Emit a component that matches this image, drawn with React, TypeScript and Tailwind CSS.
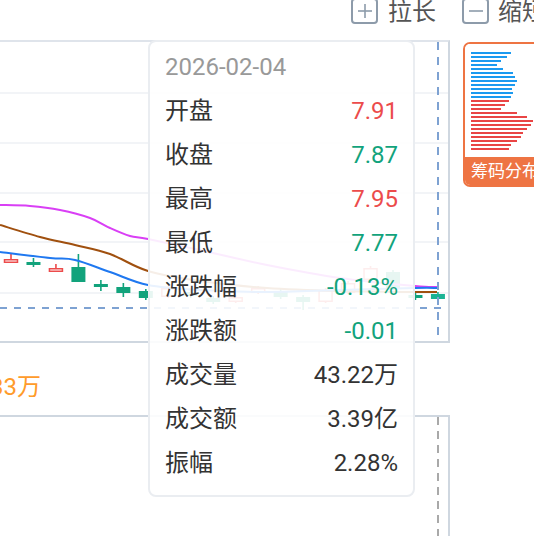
import React from 'react';

const RED = '#ec4b4b';
const GREEN = '#12a37c';

type Candle = [string, number, number, number, number];
const candles: Candle[] = [
  ['r', 217, 221, 212, 221],
  ['g', 220, 223, 216, 225],
  ['r', 226, 230, 222, 230],
  ['g', 225, 240, 212, 240],
  ['g', 242, 245, 238, 249],
  ['g', 245, 251, 241, 255],
  ['g', 249, 256, 247, 258],
  ['r', 246, 255, 244, 256],
  ['g', 250, 254, 248, 256],
  ['g', 256, 260, 254, 262],
  ['r', 255, 260, 253, 261],
  ['r', 246, 251, 244, 252],
  ['g', 249, 255, 247, 257],
  ['g', 255, 260, 253, 268],
  ['r', 248, 260, 246, 261],
  ['r', 241, 251, 239, 252],
  ['r', 226, 238, 224, 239],
  ['g', 230, 246, 228, 248],
  ['g', 253, 256, 251, 258],
  ['h', 252, 257, 250, 260],
];

const magenta: [number, number][] = [
  [0, 163], [30, 164], [60, 168], [90, 176], [110, 186], [130, 194], [148, 197], [200, 208], [267, 223], [340, 236], [415, 244], [437, 245],
];
const brown: [number, number][] = [
  [0, 183], [40, 195], [75, 203], [110, 212], [148, 229], [200, 239], [267, 246], [340, 249], [415, 250], [437, 250],
];
const blue: [number, number][] = [
  [0, 210], [50, 216], [75, 218], [110, 230], [148, 243], [200, 248], [267, 250], [340, 248], [415, 246], [437, 246],
];

function smooth(pts: [number, number][]) {
  let d = `M${pts[0][0]},${pts[0][1]}`;
  for (let i = 0; i < pts.length - 1; i++) {
    const p0 = pts[i - 1] || pts[i];
    const p1 = pts[i];
    const p2 = pts[i + 1];
    const p3 = pts[i + 2] || p2;
    const c1x = p1[0] + (p2[0] - p0[0]) / 6;
    const c1y = p1[1] + (p2[1] - p0[1]) / 6;
    const c2x = p2[0] - (p3[0] - p1[0]) / 6;
    const c2y = p2[1] - (p3[1] - p1[1]) / 6;
    d += ` C${c1x},${c1y} ${c2x},${c2y} ${p2[0]},${p2[1]}`;
  }
  return d;
}

const bars: [number, string][] = [
  [40, 'b'], [36, 'b'], [30, 'b'], [26, 'b'], [32, 'b'], [42, 'b'], [44, 'b'], [46, 'b'], [44, 'b'], [41, 'b'], [42, 'b'], [40, 'b'],
  [38, 'r'], [34, 'r'], [30, 'r'], [46, 'r'], [56, 'r'], [62, 'r'], [60, 'r'], [56, 'r'], [52, 'r'], [50, 'r'], [46, 'r'], [40, 'r'], [38, 'r'],
];

const rows: [string, string, string][] = [
  ['开盘', '7.91', 'text-[#ec4b4b]'],
  ['收盘', '7.87', 'text-[#12a37c]'],
  ['最高', '7.95', 'text-[#ec4b4b]'],
  ['最低', '7.77', 'text-[#12a37c]'],
  ['涨跌幅', '-0.13%', 'text-[#12a37c]'],
  ['涨跌额', '-0.01', 'text-[#12a37c]'],
  ['成交量', '43.22万', 'text-[#333333]'],
  ['成交额', '3.39亿', 'text-[#333333]'],
  ['振幅', '2.28%', 'text-[#333333]'],
];

function MainChart() {
  return (
    <svg width="448" height="299" viewBox="0 0 448 299" className="block">
      {[51, 101, 151, 200, 251].map((y) => (
        <line key={y} x1="0" x2="448" y1={y} y2={y} stroke="#eef1f5" strokeWidth="1.5" />
      ))}
      {candles.map((c, i) => {
        const x = 11 + i * 22.47;
        const [t, top, bot, hi, lo] = c;
        const col = t === 'r' ? RED : t === 'h' ? '#1bb394' : GREEN;
        return (
          <g key={i}>
            <line x1={x} x2={x} y1={hi} y2={lo} stroke={col} strokeWidth="1.6" />
            {t === 'r' ? (
              <rect x={x - 6.5} y={top + 0.75} width={13} height={Math.max(bot - top - 1.5, 1)} fill="#ffffff" stroke={col} strokeWidth="1.5" />
            ) : (
              <rect x={x - 7} y={top} width={14} height={bot - top} fill={col} />
            )}
          </g>
        );
      })}
      <path d={smooth(magenta)} fill="none" stroke="#d93ff5" strokeWidth="2" />
      <path d={smooth(brown)} fill="none" stroke="#a0500f" strokeWidth="2" />
      <path d={smooth(blue)} fill="none" stroke="#1f78f0" strokeWidth="2" />
      <line x1="0" x2="448" y1="266" y2="266" stroke="#7ea2d2" strokeWidth="2" strokeDasharray="7 7" />
      <line x1="438" x2="438" y1="0" y2="299" stroke="#7ea2d2" strokeWidth="2" strokeDasharray="8 7" />
    </svg>
  );
}

function PlusBox({ minus }: { minus?: boolean }) {
  return (
    <div className="-mt-[2px] w-[27px] h-[26px] border-2 border-[#8d9baa] rounded-[4px] flex items-center justify-center shrink-0">
      <svg width="16" height="16" viewBox="0 0 16 16">
        <line x1="1" x2="15" y1="8" y2="8" stroke="#8d9baa" strokeWidth="1.6" />
        {!minus && <line x1="8" x2="8" y1="1" y2="15" stroke="#8d9baa" strokeWidth="1.6" />}
      </svg>
    </div>
  );
}

export default function App() {
  return (
    <div className="relative w-[534px] h-[536px] overflow-hidden bg-white flex flex-col font-['Roboto','Noto_Sans_CJK_SC',sans-serif]">
      <div className="h-[40px] shrink-0 flex items-start pl-[351px] whitespace-nowrap text-[#555555] text-[24px] leading-[24px]">
        <div className="flex items-start gap-[10px]">
          <PlusBox />
          <span>拉长</span>
        </div>
        <div className="flex items-start gap-[9px] ml-[26px]">
          <PlusBox minus />
          <span>缩短</span>
        </div>
      </div>
      <div className="flex items-start shrink-0">
        <div className="w-[450px] h-[303px] shrink-0 border-t-2 border-r-2 border-b-2 border-t-[#dfe4eb] border-r-[#cfd7e0] border-b-[#cfd7e0]">
          <MainChart />
        </div>
        <div className="ml-[13px] mt-[2px] w-[90px] h-[145px] shrink-0 border-2 border-[#ee7443] rounded-[7px] overflow-hidden flex flex-col">
          <div className="flex-1 bg-white pt-[8px] pl-[6px] flex flex-col gap-[2px]">
            {bars.map(([w, c], i) => (
              <div key={i} className={c === 'b' ? 'h-[2px] bg-[#1b9af0]' : 'h-[2px] bg-[#e94545]'} style={{ width: w }} />
            ))}
          </div>
          <div className="h-[28px] bg-[#ee7443] text-white text-[17px] leading-[17px] pl-[6px] flex items-center whitespace-nowrap">筹码分布</div>
        </div>
      </div>
      <div className="h-[72px] shrink-0 pt-[16px] flex items-center">
        <div className="w-[41px] h-[56px] overflow-hidden flex items-center justify-end whitespace-nowrap text-[24px] text-[#ff9b2a]">
          MA5:4133万
        </div>
      </div>
      <div className="w-[450px] flex-1 border-t-2 border-r-2 border-[#cfd7e0]">
        <svg width="448" height="119" className="block">
          <line x1="438" x2="438" y1="0" y2="119" stroke="#a9a9a9" strokeWidth="2" strokeDasharray="8 6" />
        </svg>
      </div>

      <div className="absolute left-[148px] top-[40px] w-[267px] h-[457px] rounded-[8px] border-2 border-[#eaedf1] bg-white/90 px-[15px] pt-[3px] flex flex-col text-[24px] leading-[24px]">
        <div className="h-[44px] flex items-center text-[#999999]">2026-02-04</div>
        {rows.map(([k, v, cls]) => (
          <div key={k} className="h-[44px] flex items-center justify-between">
            <span className="text-[#333333]">{k}</span>
            <span className={cls}>{v}</span>
          </div>
        ))}
      </div>
    </div>
  );
}
